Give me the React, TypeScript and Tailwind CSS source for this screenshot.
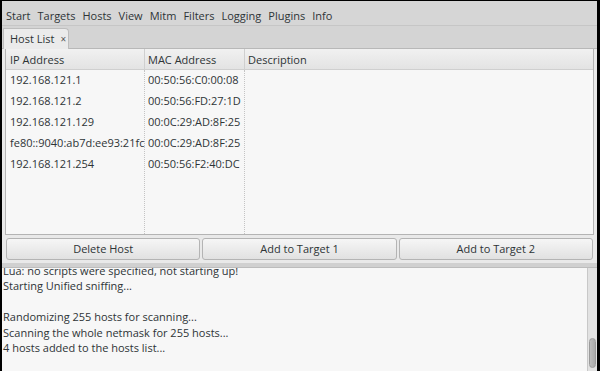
import React from "react";

const menus = ["Start", "Targets", "Hosts", "View", "Mitm", "Filters", "Logging", "Plugins", "Info"];
const hosts: [string, string][] = [
  ["192.168.121.1", "00:50:56:C0:00:08"],
  ["192.168.121.2", "00:50:56:FD:27:1D"],
  ["192.168.121.129", "00:0C:29:AD:8F:25"],
  ["fe80::9040:ab7d:ee93:21fc", "00:0C:29:AD:8F:25"],
  ["192.168.121.254", "00:50:56:F2:40:DC"],
];
const logs = [
  "Lua: no scripts were specified, not starting up!",
  "Starting Unified sniffing...",
  "",
  "Randomizing 255 hosts for scanning...",
  "Scanning the whole netmask for 255 hosts...",
  "4 hosts added to the hosts list...",
];

function Btn({ label }: { label: string }) {
  return (
    <div className="flex-1 h-[22px] flex items-center justify-center rounded-[3px] border border-[#b4b4b4] bg-gradient-to-b from-[#f6f6f6] to-[#e1e1e1] text-[11px] text-[#2e3436]">
      {label}
    </div>
  );
}

export default function App() {
  return (
    <div
      className="w-[600px] h-[371px] overflow-hidden flex flex-col bg-black pt-px pl-[2px] pr-[3px] text-[#2e3436]"
      style={{ fontFamily: '"Open Sans", "Noto Sans", sans-serif' }}
    >
      <div className="flex-1 flex flex-col bg-[#d6d6d6] min-h-0">
        {/* menu bar */}
        <div className="h-[25px] flex items-center gap-[7px] pl-[4px] pt-[7px] border-b border-[#c6c6c6] text-[11px] bg-[#d6d6d6]">
          {menus.map((m) => (
            <span key={m}>{m}</span>
          ))}
        </div>
        {/* tab strip */}
        <div className="h-[23px] flex items-end pl-px border-b border-[#b8b8b8] bg-[#d4d4d4]">
          <div className="h-[21px] w-[66px] flex items-center gap-[6px] pl-[6px] bg-[#ebebeb] border border-b-0 border-[#bdbdbd] rounded-tr-[4px] text-[11px] -mb-px">
            <span>Host List</span>
            <span className="text-[10px] text-[#555]">×</span>
          </div>
        </div>
        {/* notebook page */}
        <div className="flex flex-col bg-[#e9e9e9] pl-[3px] pr-[3px] pb-[3px]">
          <div className="h-[186px] border border-[#b4b4b4] border-t-0 bg-[#f7f7f7] flex flex-col">
            <div className="h-[21px] flex text-[11px] bg-gradient-to-b from-[#f1f1f1] to-[#e3e3e3] border-b border-[#cfcfcf]">
              <div className="w-[139px] pl-[4px] pt-[2px] flex items-center border-r border-[#cfcfcf]">IP Address</div>
              <div className="w-[100px] pl-[3px] pt-[2px] flex items-center border-r border-[#cfcfcf]">MAC Address</div>
              <div className="flex-1 pl-[3px] pt-[2px] flex items-center">Description</div>
            </div>
            <div className="flex-1 flex">
              <div className="w-[139px] border-r border-dotted border-[#c4c4c4] flex flex-col">
                {hosts.map(([ip]) => (
                  <div key={ip} className="h-[21px] pl-[4px] flex items-center text-[11px]">{ip}</div>
                ))}
              </div>
              <div className="w-[100px] border-r border-dotted border-[#c4c4c4] flex flex-col">
                {hosts.map(([ip, mac]) => (
                  <div key={ip} className="h-[21px] pl-[3px] flex items-center text-[11px]">{mac}</div>
                ))}
              </div>
              <div className="flex-1" />
            </div>
          </div>
          <div className="flex gap-[2px] pt-[3px] pl-[1px] pr-px">
            <Btn label="Delete Host" />
            <Btn label="Add to Target 1" />
            <Btn label="Add to Target 2" />
          </div>
        </div>
        {/* pane separator */}
        <div className="h-[5px] bg-[#d0d0d0] border-b border-[#bcbcbc]" />
        {/* log */}
        <div className="flex-1 min-h-0 flex bg-[#f7f7f7] overflow-hidden">
          <div className="flex-1 pl-px -mt-[5px] text-[11px] leading-[15.4px]">
            {logs.map((l, i) => (
              <div key={i} className="h-[15.4px] whitespace-pre">{l || " "}</div>
            ))}
          </div>
          <div className="w-[10px] bg-[#e2e2e2] border-l border-[#c8c8c8] flex flex-col justify-end pb-[3px] px-px">
            <div className="h-[30px] rounded-[4px] bg-gradient-to-r from-[#bdbdbd] to-[#a9a9a9] border border-[#9a9a9a]" />
          </div>
        </div>
      </div>
    </div>
  );
}
